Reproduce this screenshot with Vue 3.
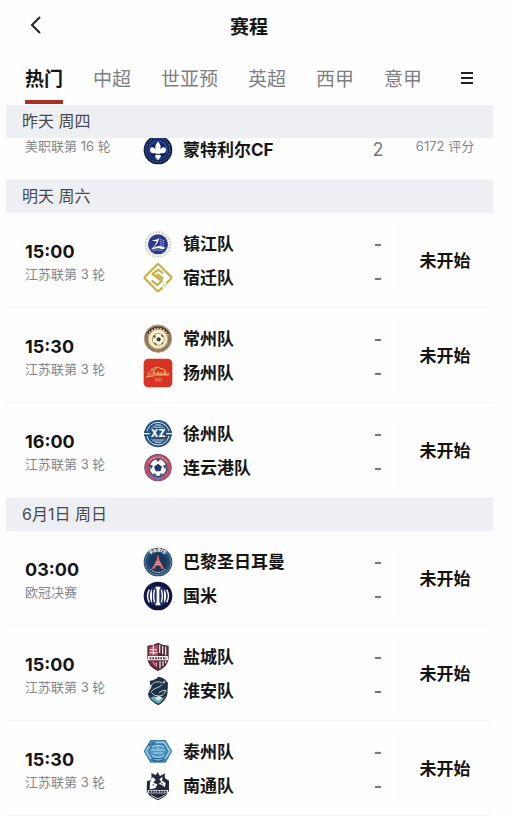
<template>
  <div class="page">
    <svg class="sprite" aria-hidden="true">
      <symbol id="montreal" viewBox="0 0 90 90">
        <circle cx="45" cy="45" r="43" fill="#15224a"/>
        <circle cx="45" cy="45" r="36" fill="none" stroke="#5f7fc8" stroke-width="3" stroke-dasharray="5 4"/>
        <circle cx="45" cy="45" r="31" fill="#1f3f9a"/>
        <circle cx="45" cy="47" r="25" fill="#12245c"/>
        <path d="M45 20c9 9 10 16 5 29 4-13 16-16 19-6 1 9-6 14-14 11l-4 3 3 8-9 11-9-11 3-8-4-3c-8 3-15-2-14-11 3-10 15-7 19 6-5-13-4-20 5-29z" fill="#fff"/>
        <path d="M33 58h24" stroke="#12245c" stroke-width="3"/>
      </symbol>
      <symbol id="zhenjiang" viewBox="0 0 90 90">
        <circle cx="45" cy="46" r="40" fill="#f6f8ee" stroke="#dfe4cf" stroke-width="2"/>
        <circle cx="45" cy="46" r="36" fill="none" stroke="#a3abcf" stroke-width="4" stroke-dasharray="3 6"/>
        <circle cx="45" cy="46" r="30" fill="#2c3a8c"/>
        <path d="M27 33c8 1 15-1 22-6-3 12-8 21-18 29 9-3 14-5 19-5 7 0 11 5 19 5-8 5-15 4-20 2-9-2-15 2-25 3 8-7 15-15 17-25-6 1-11 0-14-3z" fill="#fff"/>
        <path d="M54 30v23M61 33v20" stroke="#9aa5dc" stroke-width="4" stroke-dasharray="4 2"/>
        <path d="M29 65c9-5 20 1 31-2" fill="none" stroke="#b7c0e6" stroke-width="2"/>
      </symbol>
      <symbol id="suqian" viewBox="0 0 90 90">
        <path d="M57 75L49 82q-4 4-8 0L7 48q-4-4 0-8L41 6q4-4 8 0l34 34q4 4 0 8L72 59" fill="none" stroke="#c6b44c" stroke-width="7" stroke-linecap="round"/>
        <path d="M60 31L46 20 29 33l27 21-13 12-17-14M42 33l19 15" fill="none" stroke="#c6b44c" stroke-width="7" stroke-linejoin="round"/>
        <path d="M60 69l7-7M65 74l7-7" stroke="#a9c86b" stroke-width="3"/>
      </symbol>
      <symbol id="changzhou" viewBox="0 0 90 90">
        <circle cx="45" cy="44" r="41" fill="#8b7561" stroke="#b39b78" stroke-width="3"/>
        <path d="M14 34A34 34 0 0 1 76 34" fill="none" stroke="#4a3029" stroke-width="12"/>
        <path d="M14 34A34 34 0 0 1 76 34" fill="none" stroke="#e6d3b4" stroke-width="5" stroke-dasharray="5 4"/>
        <path d="M16 57a32 32 0 0 0 58 0" fill="none" stroke="#d3bd91" stroke-width="3" stroke-dasharray="4 3"/>
        <circle cx="45" cy="45" r="29" fill="#f7efd2" stroke="#c8ad72" stroke-width="3"/>
        <circle cx="46" cy="46" r="18" fill="#fdf8e6" stroke="#b79a55" stroke-width="3"/>
        <path d="M47 39l7 5-3 8H43l-3-8z" fill="#3c3732"/>
        <path d="M30 37l6-5 3 6-6 5zM56 31l6 6-4 3-4-5zM33 58l5-2 4 6-5 2zM55 58l4-3 2 3-5 5z" fill="#6d5733"/>
      </symbol>
      <symbol id="yangzhou" viewBox="0 0 90 90">
        <rect x="2" y="2" width="86" height="86" rx="14" fill="#d93324"/>
        <path d="M12 56c9-7 14-10 23-10 13 0 22 6 43 1M14 47c9-3 10-14 22-18 6-3 12-1 17 3M26 33l8 13M41 30c-8 5-10 12-9 24M55 32l10 3 4 10M11 57l22-4M37 51h39" fill="none" stroke="#f6b868" stroke-width="3" stroke-linecap="round"/>
        <path d="M46 40v12M55 41v10M64 41v9" stroke="#f6b868" stroke-width="4"/>
        <path d="M37 62h7v7h-7zM48 62h7v7h-7z" fill="none" stroke="#f1a35b" stroke-width="2"/>
      </symbol>
      <symbol id="xuzhou" viewBox="0 0 90 90">
        <circle cx="45" cy="44" r="41" fill="#24507c"/>
        <circle cx="45" cy="44" r="34" fill="none" stroke="#dce8f1" stroke-width="3"/>
        <circle cx="45" cy="44" r="26" fill="none" stroke="#a8c0d6" stroke-width="2"/>
        <path d="M3 37h17v14H3zM70 37h17v14H70z" fill="#24507c"/>
        <path d="M3 44h18M69 44h18" stroke="#fff" stroke-width="4"/>
        <path d="M20 30h50v29H20z" fill="#24507c"/>
        <text x="45" y="54" text-anchor="middle" font-size="30" font-weight="800" fill="#fff">XZ</text>
        <path d="M31 25h28M29 63h32M36 70h18M37 18h16" stroke="#bdd0e2" stroke-width="3"/>
      </symbol>
      <symbol id="lianyungang" viewBox="0 0 90 90">
        <circle cx="45" cy="44" r="41" fill="#3a477e"/>
        <circle cx="45" cy="44" r="34" fill="none" stroke="#c44d61" stroke-width="11"/>
        <path d="M17 29A32 32 0 0 1 73 29" fill="none" stroke="#e9acb5" stroke-width="4" stroke-dasharray="5 4"/>
        <path d="M17 60A32 32 0 0 0 73 60" fill="none" stroke="#6580b6" stroke-width="5" stroke-dasharray="7 4"/>
        <circle cx="45" cy="44" r="25" fill="#fff"/>
        <path d="M45 32l12 9-5 14H38l-5-14z" fill="#25376c"/>
        <path d="M38 19h14l-7 7zM21 35l9 3-7 12zM69 35l-9 3 7 12zM30 62l7-1 3 8zM60 62l-7-1-3 8z" fill="#25376c"/>
      </symbol>
      <symbol id="psg" viewBox="0 0 90 90">
        <circle cx="45" cy="45" r="43" fill="#254b70"/>
        <circle cx="45" cy="45" r="39" fill="none" stroke="#7fa0b4" stroke-width="2"/>
        <circle cx="45" cy="45" r="28" fill="#19395f"/>
        <path id="psg-arc" d="M19 34A27 27 0 0 1 71 34" fill="none"/>
        <text font-size="15" font-weight="800" fill="#fff" text-anchor="middle"><textPath href="#psg-arc" startOffset="50%">PARIS</textPath></text>
        <path d="M45 22l4 15 5 13 11 15H54c-1-7-4-10-9-10s-8 3-9 10H25l11-15 5-13z" fill="#e05f5b"/>
        <path d="M37 46h16M34 53h22" stroke="#f4c4bf" stroke-width="2"/>
        <path d="M22 66c10 14 36 14 46 0" fill="none" stroke="#c8d6da" stroke-width="3" stroke-dasharray="4 3"/>
      </symbol>
      <symbol id="inter" viewBox="0 0 90 90">
        <circle cx="45" cy="45" r="43" fill="#12163f"/>
        <circle cx="45" cy="45" r="31" fill="#242f66"/>
        <path d="M38 17h14v5l-3 4v38l3 4v5H38v-5l3-4V26l-3-4z" fill="#fff"/>
        <path d="M35 26q-6 19 0 38M55 26q6 19 0 38" fill="none" stroke="#fff" stroke-width="4"/>
        <path d="M27 24q-13 21 0 42zM63 24q13 21 0 42z" fill="#fff"/>
        <path d="M19 26q-11 19 0 38M71 26q11 19 0 38" fill="none" stroke="#fff" stroke-width="4"/>
      </symbol>
      <symbol id="yancheng" viewBox="0 0 90 90">
        <path d="M45 2q13 8 32 9v37q-1 26-32 39Q14 74 13 48V11q19-1 32-9z" fill="#4a2834"/>
        <path d="M45 7v34H17V15q16-1 28-8z" fill="#b24a66"/>
        <path d="M50 8v25M59 12v25M68 14v26M31 10v28M21 23h20M20 32h23" stroke="#f1dce1" stroke-width="4"/>
        <path d="M15 42h60v13H15z" fill="#f2ecec"/>
        <path d="M20 49h50" stroke="#513340" stroke-width="6" stroke-dasharray="5 3"/>
        <path d="M18 57h26v24Q21 70 18 57z" fill="#8e2944"/>
        <path d="M51 58v21M60 58v14M68 57v7" stroke="#eee6e6" stroke-width="4"/>
        <path d="M30 59l4 9 7-5-2 11" fill="none" stroke="#e0a8b3" stroke-width="3"/>
      </symbol>
      <symbol id="huaian" viewBox="0 0 90 90">
        <path d="M20 14q16-1 26-12 20 3 29 19l-2 34Q69 75 46 88 17 74 15 55l8-22z" fill="#1f3146"/>
        <path d="M14 33l15-9-8 18-7 3z" fill="#d9ebee"/>
        <path d="M28 24c8-7 19-9 30-3M24 49c7-15 26-12 33-24M48 50q10-8 21-7-7 18-22 17-14 0-21-9" fill="none" stroke="#b4d4da" stroke-width="3"/>
        <path d="M22 65q14-8 23 2 11 8 22-8-5 14-21 24-16-6-24-18z" fill="#69afb9"/>
        <path d="M59 17l9-3-5 9zM35 65l13-6 11 7-13 8z" fill="#d9e8ea"/>
      </symbol>
      <symbol id="taizhou" viewBox="0 0 90 90">
        <path d="M2 43L22 9h46l20 34-20 34H22z" fill="#397fae"/>
        <path d="M8 43l18-28h38l18 28-18 28H26z" fill="#83bfdf" stroke="#a9cfe3" stroke-width="3"/>
        <path d="M16 43l13-22h32l13 22-13 22H29z" fill="#4d99c5" stroke="#285f8b" stroke-width="3"/>
        <path d="M27 31q18-12 36 0M25 39h40M31 48h28M26 55q19 12 38 0M45 27v10" fill="none" stroke="#b5d9ea" stroke-width="3"/>
        <path d="M23 67q22 11 44 0M17 27q10-11 20-12" fill="none" stroke="#275e8c" stroke-width="4"/>
      </symbol>
      <symbol id="nantong" viewBox="0 0 90 90">
        <path d="M12 30l14-3-1-21 13 6 6-8 7 11 14-8 1 15 12 7v30q-6 17-33 29Q17 78 11 61z" fill="#26293d"/>
        <path d="M29 18l9 8-7 9 12 5-6 12-17 3 1-21zM49 25l10-8-2 12 11 7-3 13-9-8-9-2 8-7z" fill="#fff"/>
        <path d="M43 20l-1 16 8 7-7 12M56 35l3 5M29 41l5 2" fill="none" stroke="#26293d" stroke-width="3"/>
        <path d="M14 57h61v10H14z" fill="#dfe2e9"/>
        <path d="M18 62h53" stroke="#26293d" stroke-width="6" stroke-dasharray="6 2"/>
        <path d="M24 72q9 7 21 11 13-4 20-11" fill="none" stroke="#c8ccd8" stroke-width="3"/>
      </symbol>
    </svg>

    <header class="topbar">
      <button class="icon-btn back" aria-label="返回">
        <svg width="12" height="18" viewBox="0 0 12 18"><path d="M10 1L2 9l8 8" fill="none" stroke="#222" stroke-width="2"/></svg>
      </button>
      <h1>赛程</h1>
    </header>

    <nav class="tabs">
      <button
        v-for="tab in tabs"
        :key="tab"
        class="tab"
        :class="{ active: tab === activeTab }"
        @click="activeTab = tab"
      >{{ tab }}</button>
      <button class="icon-btn menu" aria-label="全部">
        <svg width="14" height="12" viewBox="0 0 14 12"><path d="M1 1h12M1 6h12M1 11h12" stroke="#222" stroke-width="2"/></svg>
      </button>
    </nav>

    <main class="schedule">
      <section v-for="day in days" :key="day.date">
        <h2 class="date">{{ day.date }}</h2>
        <ul class="matches" :class="{ scrolled: day.scrolled }">
          <li v-for="(match, index) in day.matches" :key="index" class="match">
            <div class="info">
              <time v-if="match.time">{{ match.time }}</time>
              <span class="league">{{ match.league }}</span>
            </div>
            <div class="teams">
              <div v-for="team in match.teams" :key="team.name" class="team">
                <svg class="crest" aria-hidden="true"><use :href="'#' + team.crest"/></svg>
                <span class="name">{{ team.name }}</span>
                <span class="score" :class="{ final: team.score }">{{ team.score || '-' }}</span>
              </div>
            </div>
            <div class="status" :class="{ rating: match.rating }">{{ match.rating || '未开始' }}</div>
          </li>
        </ul>
      </section>
    </main>
  </div>
</template>

<script setup>
import { ref } from 'vue'

const tabs = ['热门', '中超', '世亚预', '英超', '西甲', '意甲']
const activeTab = ref('热门')

const game = (time, league, home, away) => ({
  time,
  league,
  teams: [
    { name: home[0], crest: home[1] },
    { name: away[0], crest: away[1] }
  ]
})

const days = [
  {
    date: '昨天 周四',
    scrolled: true,
    matches: [
      {
        league: '美职联第 16 轮',
        teams: [{ name: '蒙特利尔CF', crest: 'montreal', score: 2 }],
        rating: '6172 评分'
      }
    ]
  },
  {
    date: '明天 周六',
    matches: [
      game('15:00', '江苏联第 3 轮', ['镇江队', 'zhenjiang'], ['宿迁队', 'suqian']),
      game('15:30', '江苏联第 3 轮', ['常州队', 'changzhou'], ['扬州队', 'yangzhou']),
      game('16:00', '江苏联第 3 轮', ['徐州队', 'xuzhou'], ['连云港队', 'lianyungang'])
    ]
  },
  {
    date: '6月1日 周日',
    matches: [
      game('03:00', '欧冠决赛', ['巴黎圣日耳曼', 'psg'], ['国米', 'inter']),
      game('15:00', '江苏联第 3 轮', ['盐城队', 'yancheng'], ['淮安队', 'huaian']),
      game('15:30', '江苏联第 3 轮', ['泰州队', 'taizhou'], ['南通队', 'nantong'])
    ]
  }
]
</script>

<style>
body {
  margin: 0;
  background: #fefefe;
}
</style>

<style scoped>
.page {
  font-family: Inter, "Noto Sans CJK SC", sans-serif;
  color: #151515;
  overflow: hidden;
}

.sprite {
  position: absolute;
  width: 90px;
  height: 90px;
  visibility: hidden;
}

button {
  border: 0;
  padding: 0;
  background: none;
  font-family: inherit;
  cursor: pointer;
}

.icon-btn {
  display: flex;
  align-items: center;
  justify-content: center;
}

.topbar {
  display: grid;
  grid-template-columns: 24px 1fr 24px;
  align-items: center;
  height: 56px;
  padding: 0 39px 0 24px;
}

.back {
  height: 24px;
  margin-bottom: 6px;
}

h1 {
  margin: 0;
  font-size: 19px;
  line-height: 28px;
  font-weight: 700;
  text-align: center;
}

.tabs {
  display: flex;
  gap: 30px;
  height: 49px;
  padding: 0 39px 0 25px;
}

.tab {
  box-sizing: border-box;
  height: 48px;
  padding-top: 4px;
  border-bottom: 4px solid transparent;
  font-size: 19px;
  line-height: 40px;
  color: #7d7f82;
  white-space: nowrap;
}

.tab.active {
  border-bottom-color: #ad2d24;
  color: #151515;
  font-weight: 700;
}

.menu {
  height: 44px;
  margin-left: auto;
}

.schedule {
  padding: 0 20px 0 6px;
}

.date {
  margin: 0;
  padding-left: 16px;
  background: #eeeff3;
  font-size: 16px;
  line-height: 33px;
  font-weight: 400;
  color: #48494c;
}

.matches {
  margin: 0;
  padding: 0;
  list-style: none;
}

.match {
  box-sizing: border-box;
  display: flex;
  align-items: center;
  height: 95px;
  padding: 2px 0 0 19px;
  border-bottom: 1px solid #f7f7f8;
}

.info {
  display: flex;
  flex-direction: column;
  width: 118px;
  padding-top: 2px;
}

time {
  font-size: 18px;
  line-height: 24px;
  font-weight: 700;
}

.league {
  font-size: 13px;
  line-height: 20px;
  color: #85868a;
  white-space: nowrap;
}

.teams {
  flex: 1;
  display: flex;
  flex-direction: column;
  gap: 4px;
  border-right: 1px solid #f5f5f6;
}

.team {
  display: flex;
  align-items: center;
  height: 30px;
}

.crest {
  width: 30px;
  height: 30px;
  margin-right: 10px;
}

.name {
  flex: 1;
  font-size: 17px;
  line-height: 24px;
  font-weight: 700;
  white-space: nowrap;
}

.score {
  width: 40px;
  font-size: 18px;
  line-height: 24px;
  font-weight: 700;
  text-align: center;
  color: #77787b;
}

.score.final {
  font-weight: 400;
}

.status {
  box-sizing: border-box;
  width: 94px;
  padding-right: 2px;
  font-size: 17px;
  line-height: 24px;
  font-weight: 700;
  text-align: center;
}

.status.rating {
  font-size: 13px;
  line-height: 20px;
  font-weight: 400;
  color: #85868a;
}

/* the last match of the day is partly scrolled under its date bar */
.scrolled {
  display: flex;
  flex-direction: column;
  justify-content: flex-end;
  height: 42px;
  overflow: hidden;
}

.scrolled .match {
  flex-shrink: 0;
  align-items: flex-end;
}

.scrolled .info,
.scrolled .status {
  padding-bottom: 23px;
}

.scrolled .teams {
  padding-bottom: 14px;
  border-color: transparent;
}
</style>
